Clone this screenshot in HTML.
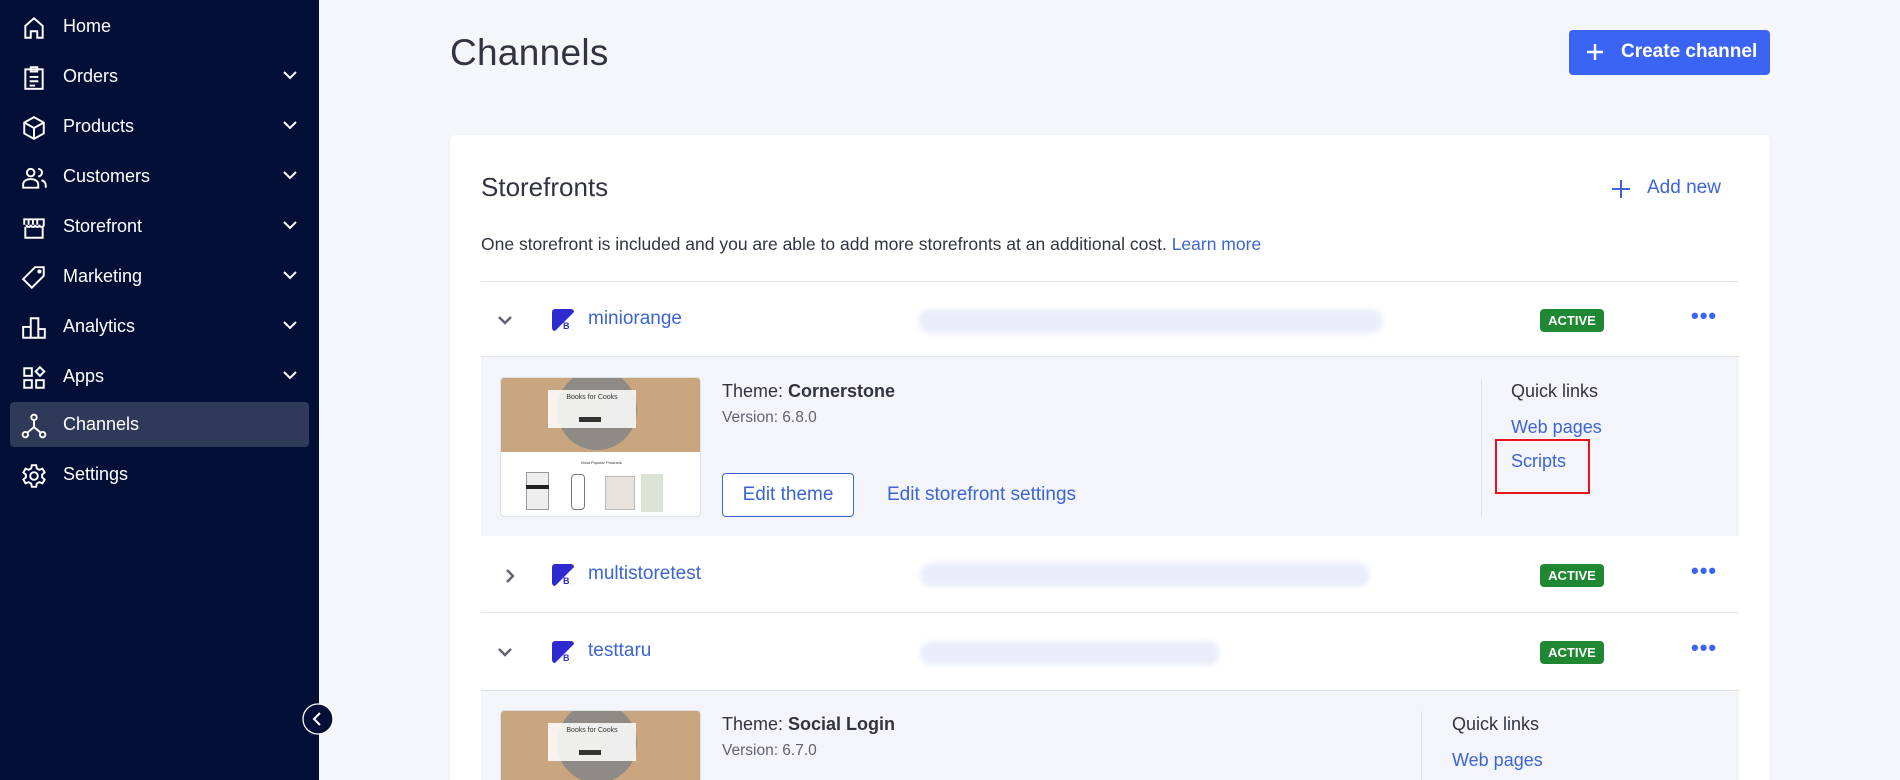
<!DOCTYPE html>
<html style="width:1900px;height:780px;overflow:hidden"><head><meta charset="utf-8"><style>
*{box-sizing:border-box;margin:0;padding:0}
body{width:1900px;height:780px;overflow:hidden;background:#f4f6fa;font-family:"Liberation Sans",sans-serif;position:relative}
.a{position:absolute}
#sb{left:0;top:0;width:319px;height:780px;background:#030f37}
.ni{position:absolute;left:0;width:319px;height:50px;color:#fff;font-size:18px}
.ni svg.ic{position:absolute;left:21px;top:13px}
.ni span{position:absolute;left:63px;top:14px}
.ni svg.ch{position:absolute;left:282px;top:18px}
.lnk{color:#3c64d4}
.card{left:450px;top:135px;width:1320px;height:645px;background:#fff;border-radius:5px 5px 0 0;box-shadow:0 1px 3px rgba(0,0,0,.08);overflow:hidden}
.hr{height:1px;background:#dfe2ec}
.blur{height:24px;border-radius:12px;background:#e9edfb;filter:blur(3px)}
.badge{background:#208833;color:#fff;font-weight:bold;font-size:13px;border-radius:4px;text-align:center;line-height:23px;width:64px;height:23px}
.dots{color:#3c64f4;font-size:22px;font-weight:bold;letter-spacing:1px}
.logo{width:22px;height:22px;background:#2d2bd0;border-radius:3px;overflow:hidden}
.panel{background:#f3f5fa}
.thumb{width:201px;height:140px;border:1px solid #dde1e8;border-radius:4px;background:#fff;overflow:hidden}
.t18{font-size:18px;color:#313440}
</style></head><body>
<div id="sb" class="a">
 <div class="ni" style="top:2px"><svg class="ic" width="26" height="26" viewBox="0 0 24 24" fill="none" stroke="#fff" stroke-width="1.8"><path d="M4 21V10l8-7 8 7v11h-5v-6h-6v6z"/></svg><span>Home</span></div>
 <div class="ni" style="top:52px"><svg class="ic" width="26" height="26" viewBox="0 0 24 24" fill="none" stroke="#fff" stroke-width="1.8"><rect x="4" y="4" width="16" height="18"/><path d="M9 2h6v4H9zM8 11h8M8 15h8M8 19h5"/></svg><span>Orders</span><svg class="ch" width="16" height="10" viewBox="0 0 16 10" fill="none" stroke="#fff" stroke-width="2"><path d="M2 2l6 6 6-6"/></svg></div>
 <div class="ni" style="top:102px"><svg class="ic" width="26" height="26" viewBox="0 0 24 24" fill="none" stroke="#fff" stroke-width="1.8"><path d="M12 2l9 5v10l-9 5-9-5V7zM3 7l9 5 9-5M12 12v10"/></svg><span>Products</span><svg class="ch" width="16" height="10" viewBox="0 0 16 10" fill="none" stroke="#fff" stroke-width="2"><path d="M2 2l6 6 6-6"/></svg></div>
 <div class="ni" style="top:152px"><svg class="ic" width="28" height="26" viewBox="0 0 26 24" fill="none" stroke="#fff" stroke-width="1.8"><circle cx="9" cy="7" r="3.5"/><path d="M2 21v-3c0-3 3-5 7-5s7 2 7 5v3zM16 3.5a3.5 3.5 0 010 7M19 14c3 1 4 3 4 5v2"/></svg><span>Customers</span><svg class="ch" width="16" height="10" viewBox="0 0 16 10" fill="none" stroke="#fff" stroke-width="2"><path d="M2 2l6 6 6-6"/></svg></div>
 <div class="ni" style="top:202px"><svg class="ic" width="26" height="26" viewBox="0 0 24 24" fill="none" stroke="#fff" stroke-width="1.8"><path d="M3 9V4h18v5c0 1.5-1 2-2 2s-2-.5-2-2c0 1.5-1 2-2 2s-2-.5-2-2c0 1.5-1 2-2 2s-2-.5-2-2c0 1.5-1 2-2 2s-2-.5-2-2M4 11v10h16V11M7 4v5M11 4v5M15 4v5"/></svg><span>Storefront</span><svg class="ch" width="16" height="10" viewBox="0 0 16 10" fill="none" stroke="#fff" stroke-width="2"><path d="M2 2l6 6 6-6"/></svg></div>
 <div class="ni" style="top:252px"><svg class="ic" width="26" height="26" viewBox="0 0 24 24" fill="none" stroke="#fff" stroke-width="1.8"><path d="M13 2h8v8L10 21l-8-8z"/><circle cx="17" cy="6" r="1"/></svg><span>Marketing</span><svg class="ch" width="16" height="10" viewBox="0 0 16 10" fill="none" stroke="#fff" stroke-width="2"><path d="M2 2l6 6 6-6"/></svg></div>
 <div class="ni" style="top:302px"><svg class="ic" width="26" height="26" viewBox="0 0 24 24" fill="none" stroke="#fff" stroke-width="1.8"><path d="M2 21h20V13h-6V3H9v8H2zM9 11v10M16 13v8"/></svg><span>Analytics</span><svg class="ch" width="16" height="10" viewBox="0 0 16 10" fill="none" stroke="#fff" stroke-width="2"><path d="M2 2l6 6 6-6"/></svg></div>
 <div class="ni" style="top:352px"><svg class="ic" width="26" height="26" viewBox="0 0 24 24" fill="none" stroke="#fff" stroke-width="1.8"><rect x="3" y="3" width="7" height="7"/><rect x="3" y="14" width="7" height="7"/><rect x="14" y="14" width="7" height="7"/><path d="M17.5 2l4 4-4 4-4-4z"/></svg><span>Apps</span><svg class="ch" width="16" height="10" viewBox="0 0 16 10" fill="none" stroke="#fff" stroke-width="2"><path d="M2 2l6 6 6-6"/></svg></div>
 <div class="a" style="left:10px;top:402px;width:299px;height:45px;background:#2f3a58;border-radius:4px"></div>
 <div class="ni" style="top:400px"><svg class="ic" width="26" height="26" viewBox="0 0 24 24" fill="none" stroke="#fff" stroke-width="1.8"><circle cx="12" cy="4" r="2.5"/><circle cx="4" cy="20" r="2.5"/><circle cx="20" cy="20" r="2.5"/><path d="M12 6.5V13l-6 5M12 13l6 5"/></svg><span>Channels</span></div>
 <div class="ni" style="top:450px"><svg class="ic" width="26" height="26" viewBox="0 0 24 24" fill="none" stroke="#fff" stroke-width="1.8"><circle cx="12" cy="12" r="3.5"/><path d="M10 2h4l.6 3 2.3 1.3 2.9-1 2 3.4-2.3 2v2.6l2.3 2-2 3.4-2.9-1-2.3 1.3-.6 3h-4l-.6-3-2.3-1.3-2.9 1-2-3.4 2.3-2v-2.6l-2.3-2 2-3.4 2.9 1L9.4 5z"/></svg><span>Settings</span></div>
 <svg class="a" style="left:302px;top:703px" width="32" height="32" viewBox="0 0 32 32"><circle cx="16" cy="16" r="15" fill="#030f37" stroke="#fff" stroke-width="1.3"/><path d="M18 10l-6 6 6 6" fill="none" stroke="#fff" stroke-width="2"/></svg>
</div>

<div class="a" style="left:450px;top:32px;font-size:37px;color:#313440;font-weight:300;letter-spacing:.3px">Channels</div>
<div class="a" style="left:1569px;top:30px;width:201px;height:45px;background:#3c64f4;border-radius:4px;color:#fff;font-size:19px;font-weight:bold">
 <svg class="a" style="left:16px;top:12px" width="20" height="20" viewBox="0 0 20 20" stroke="#fff" stroke-width="2.4"><path d="M10 2v16M2 10h16"/></svg>
 <span class="a" style="left:52px;top:11px">Create channel</span></div>

<div class="a card">
 <div class="a" style="left:31px;top:37px;font-size:26px;color:#313440">Storefronts</div>
 <svg class="a" style="left:1161px;top:44px" width="20" height="20" viewBox="0 0 20 20" stroke="#3c64d4" stroke-width="2"><path d="M10 1v18M1 10h18"/></svg>
 <div class="a lnk" style="left:1197px;top:42px;font-size:19px">Add new</div>
 <div class="a" style="left:31px;top:99px;font-size:17.5px;color:#313440">One storefront is included and you are able to add more storefronts at an additional cost. <span class="lnk">Learn more</span></div>
 <div class="a hr" style="left:31px;top:146px;width:1258px"></div>

 <svg class="a" style="left:47px;top:179px" width="16" height="12" viewBox="0 0 16 12" fill="none" stroke="#5e6370" stroke-width="2.4"><path d="M2 3l6 6 6-6"/></svg>
 <div class="a logo" style="left:102px;top:174px"><svg width="22" height="22"><path d="M22 3L3 22h19z" fill="#fff"/><text x="11" y="20" font-size="9" font-weight="bold" fill="#2d2bd0" font-family="Liberation Sans">B</text></svg></div>
 <div class="a lnk" style="left:138px;top:173px;font-size:19px">miniorange</div>
 <div class="a blur" style="left:468px;top:174px;width:465px"></div>
 <div class="a badge" style="left:1090px;top:174px">ACTIVE</div>
 <div class="a dots" style="left:1241px;top:168px">•••</div>
 <div class="a hr" style="left:31px;top:221px;width:1258px"></div>
 <div class="a panel" style="left:31px;top:222px;width:1258px;height:179px"></div>
 <div class="a thumb" style="left:50px;top:242px">
  <div class="a" style="left:0;top:0;width:201px;height:74px;background:#c9a67f"></div>
  <div class="a" style="left:56px;top:-8px;width:80px;height:80px;border-radius:50%;background:#8e8a86"></div>
  <div class="a" style="left:47px;top:12px;width:88px;height:38px;background:rgba(255,255,255,.85)"></div>
  <div class="a" style="left:47px;top:16px;width:88px;text-align:center;font-size:7px;color:#333">Books for Cooks</div>
  <div class="a" style="left:78px;top:39px;width:22px;height:5px;background:#333"></div>
  <div class="a" style="left:0;top:82px;width:201px;text-align:center;font-size:4px;color:#333">Most Popular Products</div>
  <div class="a" style="left:25px;top:94px;width:23px;height:38px;background:#eee;border:1px solid #999"></div>
  <div class="a" style="left:25px;top:107px;width:23px;height:4px;background:#222"></div>
  <div class="a" style="left:70px;top:96px;width:14px;height:36px;border:1px solid #777;border-radius:4px"></div>
  <div class="a" style="left:104px;top:98px;width:30px;height:34px;background:#e7e3dc;border:1px solid #bbb"></div>
  <div class="a" style="left:140px;top:96px;width:22px;height:38px;background:#dce4d8"></div>
 </div>
 <div class="a t18" style="left:272px;top:246px">Theme: <b>Cornerstone</b></div>
 <div class="a" style="left:272px;top:274px;font-size:15.5px;color:#5e6370">Version: 6.8.0</div>
 <div class="a lnk" style="left:272px;top:338px;width:132px;height:44px;border:1px solid #3c64d4;border-radius:4px;background:#fff;font-size:19px;text-align:center;line-height:42px">Edit theme</div>
 <div class="a lnk" style="left:437px;top:349px;font-size:19px">Edit storefront settings</div>
 <div class="a" style="left:1031px;top:244px;width:1px;height:138px;background:#dfe2ec"></div>
 <div class="a t18" style="left:1061px;top:246px">Quick links</div>
 <div class="a lnk" style="left:1061px;top:282px;font-size:18px">Web pages</div>
 <div class="a lnk" style="left:1061px;top:316px;font-size:18px">Scripts</div>
 <div class="a" style="left:1045px;top:304px;width:95px;height:55px;border:2px solid #e8141b"></div>

 <svg class="a" style="left:54px;top:433px" width="12" height="16" viewBox="0 0 12 16" fill="none" stroke="#5e6370" stroke-width="2.4"><path d="M3 2l6 6-6 6"/></svg>
 <div class="a logo" style="left:102px;top:429px"><svg width="22" height="22"><path d="M22 3L3 22h19z" fill="#fff"/><text x="11" y="20" font-size="9" font-weight="bold" fill="#2d2bd0" font-family="Liberation Sans">B</text></svg></div>
 <div class="a lnk" style="left:138px;top:428px;font-size:19px">multistoretest</div>
 <div class="a blur" style="left:470px;top:428px;width:450px"></div>
 <div class="a badge" style="left:1090px;top:429px">ACTIVE</div>
 <div class="a dots" style="left:1241px;top:423px">•••</div>
 <div class="a hr" style="left:31px;top:477px;width:1258px"></div>

 <svg class="a" style="left:47px;top:511px" width="16" height="12" viewBox="0 0 16 12" fill="none" stroke="#5e6370" stroke-width="2.4"><path d="M2 3l6 6 6-6"/></svg>
 <div class="a logo" style="left:102px;top:506px"><svg width="22" height="22"><path d="M22 3L3 22h19z" fill="#fff"/><text x="11" y="20" font-size="9" font-weight="bold" fill="#2d2bd0" font-family="Liberation Sans">B</text></svg></div>
 <div class="a lnk" style="left:138px;top:505px;font-size:19px">testtaru</div>
 <div class="a blur" style="left:470px;top:506px;width:300px"></div>
 <div class="a badge" style="left:1090px;top:506px">ACTIVE</div>
 <div class="a dots" style="left:1241px;top:500px">•••</div>
 <div class="a hr" style="left:31px;top:555px;width:1258px"></div>
 <div class="a panel" style="left:31px;top:556px;width:1258px;height:100px"></div>
 <div class="a thumb" style="left:50px;top:575px">
  <div class="a" style="left:0;top:0;width:201px;height:74px;background:#c9a67f"></div>
  <div class="a" style="left:56px;top:-8px;width:80px;height:80px;border-radius:50%;background:#8e8a86"></div>
  <div class="a" style="left:47px;top:12px;width:88px;height:38px;background:rgba(255,255,255,.85)"></div>
  <div class="a" style="left:47px;top:16px;width:88px;text-align:center;font-size:7px;color:#333">Books for Cooks</div>
  <div class="a" style="left:78px;top:39px;width:22px;height:5px;background:#333"></div>
 </div>
 <div class="a t18" style="left:272px;top:579px">Theme: <b>Social Login</b></div>
 <div class="a" style="left:272px;top:607px;font-size:15.5px;color:#5e6370">Version: 6.7.0</div>
 <div class="a" style="left:971px;top:576px;width:1px;height:80px;background:#dfe2ec"></div>
 <div class="a t18" style="left:1002px;top:579px">Quick links</div>
 <div class="a lnk" style="left:1002px;top:615px;font-size:18px">Web pages</div>
</div>
</body></html>
